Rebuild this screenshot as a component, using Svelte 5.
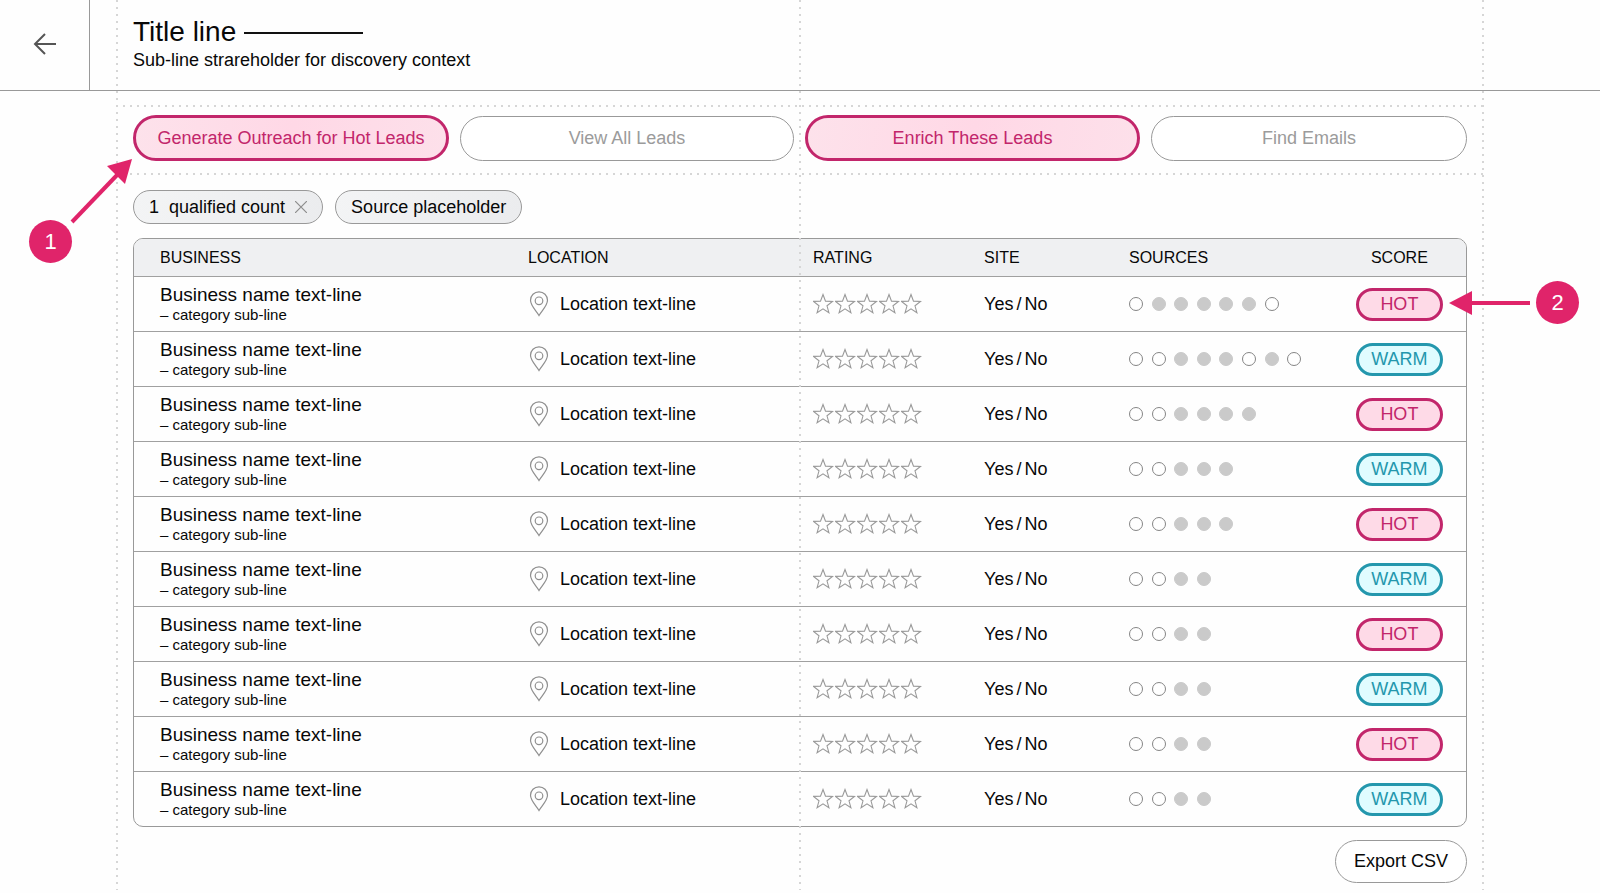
<script lang="ts">
  interface Lead { sources: string; score: 'HOT' | 'WARM' }

  // sources: "o" is an empty source, "x" is a matched one
  const leads: Lead[] = [
    { sources: 'oxxxxxo', score: 'HOT' },
    { sources: 'ooxxxoxo', score: 'WARM' },
    { sources: 'ooxxxx', score: 'HOT' },
    { sources: 'ooxxx', score: 'WARM' },
    { sources: 'ooxxx', score: 'HOT' },
    { sources: 'ooxx', score: 'WARM' },
    { sources: 'ooxx', score: 'HOT' },
    { sources: 'ooxx', score: 'WARM' },
    { sources: 'ooxx', score: 'HOT' },
    { sources: 'ooxx', score: 'WARM' },
  ]

  const actions = [
    { label: 'Generate Outreach for Hot Leads', primary: true },
    { label: 'View All Leads', primary: false },
    { label: 'Enrich These Leads', primary: true },
    { label: 'Find Emails', primary: false },
  ]
</script>

<div class="page">
  <header class="header">
    <button class="back" aria-label="Back">
      <svg width="24" height="24" viewBox="0 0 24 24" fill="none" stroke="#555" stroke-width="2">
        <path d="M23 12H2M12 2L2 12l10 10" />
      </svg>
    </button>
    <div class="heading">
      <h1>Title line <span class="rule"></span></h1>
      <p>Sub-line strareholder for discovery context</p>
    </div>
  </header>

  <main class="main">
    <div class="toolbar">
      {#each actions as action}
        <button class="action" class:primary={action.primary}>{action.label}</button>
      {/each}
    </div>

    <div class="content">
      <div class="chips">
        <span class="chip">
          <span>1</span>
          <span>qualified count</span>
          <button class="remove" aria-label="Remove filter">
            <svg width="12" height="12" viewBox="0 0 12 12" stroke="#8c8c8c" stroke-width="1.2">
              <path d="M0 0L12 12M12 0L0 12" />
            </svg>
          </button>
        </span>
        <span class="chip">Source placeholder</span>
      </div>

      <table class="leads">
        <colgroup>
          <col style="width:29.58%" />
          <col style="width:21.4%" />
          <col style="width:12.84%" />
          <col style="width:10.88%" />
          <col style="width:15.3%" />
          <col style="width:10%" />
        </colgroup>
        <thead>
          <tr>
            <th scope="col">BUSINESS</th>
            <th scope="col">LOCATION</th>
            <th scope="col">RATING</th>
            <th scope="col">SITE</th>
            <th scope="col">SOURCES</th>
            <th scope="col">SCORE</th>
          </tr>
        </thead>
        <tbody>
          {#each leads as lead}
            <tr>
              <td>
                <div class="name">Business name text-line</div>
                <div class="category">– category sub-line</div>
              </td>
              <td>
                <div class="location">
                  <svg width="22" height="26" viewBox="0 0 22 26" fill="none" stroke="#8f8f8f" stroke-width="1.2">
                    <path d="M11 24.500C9 20.500 2.500 15 2.500 9.300a8.500 8.500 0 0 1 17 0C19.500 15 13 20.500 11 24.500z" />
                    <circle cx="11" cy="9.800" r="3.800" />
                  </svg>
                  <span>Location text-line</span>
                </div>
              </td>
              <td>
                <div class="stars">
                  {#each Array(5) as _}
                    <svg width="22" height="22" viewBox="0 0 22 22" fill="none" stroke="#999" stroke-width="1.1">
                      <path d="M10 1.500L12.500 8.100L19.500 8.400L14 12.800L15.900 19.700L10 15.800L4.100 19.700L6 12.800L0.500 8.400L7.500 8.100Z" />
                    </svg>
                  {/each}
                </div>
              </td>
              <td>Yes<span class="slash">/</span>No</td>
              <td>
                <div class="sources">
                  {#each lead.sources as source}
                    <span class="dot" class:on={source === 'x'}></span>
                  {/each}
                </div>
              </td>
              <td><span class="score" class:hot={lead.score === 'HOT'}>{lead.score}</span></td>
            </tr>
          {/each}
        </tbody>
      </table>

      <div class="footer">
        <button class="export">Export CSV</button>
      </div>
    </div>
  </main>

  <div class="guides"><i></i><i></i><i></i></div>

  <!-- numbered callouts -->
  <div class="callout first">
    <svg width="64" height="66" viewBox="0 0 64 66" fill="#e0246a">
      <path d="M3 64L50 15" stroke="#e0246a" stroke-width="4" />
      <path d="M63 1L38 8L56 26Z" />
    </svg>
    <span class="badge">1</span>
  </div>
  <div class="callout second">
    <svg width="82" height="26" viewBox="0 0 82 26" fill="#e0246a">
      <path d="M81 13H20" stroke="#e0246a" stroke-width="4" />
      <path d="M0 13L23 1V25Z" />
    </svg>
    <span class="badge">2</span>
  </div>
</div>

<style>
  :global(body) { margin: 0; background: #fefefe; }
  .page {
    position: relative;
    min-height: 100vh;
    box-sizing: border-box;
    padding-bottom: 10px;
    font-family: "Liberation Sans", Arial, sans-serif;
    font-size: 18px;
    color: #080808;
  }
  button { font: inherit; color: inherit; cursor: pointer; }
  svg { display: block; flex-shrink: 0; }

  .header { display: flex; height: 90px; border-bottom: 1px solid #999; }
  .back {
    width: 90px;
    padding: 0 0 3px;
    display: flex; align-items: center; justify-content: center;
    background: none;
    border: 0; border-right: 1px solid #999;
  }
  .heading { padding: 16px 0 0 43px; }
  h1 {
    margin: 0;
    display: flex; align-items: center; gap: 8px;
    font-size: 28px; font-weight: 400; line-height: 32px;
  }
  .rule { width: 119px; height: 2px; margin-top: 2px; background: #111; }
  .heading p { margin: 0; line-height: 24px; }

  .main { padding: 14px 116px 0; }
  .toolbar {
    display: grid;
    grid-template-columns: 316fr 334fr 335fr 316fr;
    gap: 11px;
    align-items: center;
    padding: 10px 17px 14px;
    --dots: repeating-linear-gradient(90deg, #d6d6d6 0 2px, transparent 2px 7px);
    background: var(--dots) top / 100% 2px no-repeat, var(--dots) bottom / 100% 2px no-repeat;
  }
  .action {
    height: 45px;
    padding: 0 12px;
    border: 1px solid #999; border-radius: 23px;
    background: #fff;
    color: #9b9b9b;
    white-space: nowrap;
  }
  .action.primary {
    height: 46px;
    border: 3px solid #c2266b;
    background: linear-gradient(100deg, #fde2eb, #ffd8e6 50%, #fde0ea);
    color: #c2266b;
  }

  .content { padding: 0 17px; }
  .chips { display: flex; gap: 12px; margin: 15px 0 14px; }
  .chip {
    height: 32px;
    padding: 0 15px;
    display: flex; align-items: center; gap: 10px;
    border: 1px solid #999; border-radius: 17px;
    background: linear-gradient(100deg, #f3f4f5, #ebecee);
  }
  .remove { padding: 0; border: 0; background: none; }

  .leads {
    width: 100%;
    table-layout: fixed;
    border: 1px solid #999; border-radius: 10px;
    border-collapse: separate; border-spacing: 0;
    overflow: hidden;
  }
  th, td { padding: 0; text-align: left; border-bottom: 1px solid #a0a0a0; }
  th { height: 37px; background: #eff0f2; font-size: 16px; font-weight: 400; }
  td { height: 54px; }
  tr:last-child td { border-bottom: 0; }
  th:first-child, td:first-child { padding-left: 26px; }
  th:last-child, td:last-child { text-align: center; }
  .name { font-size: 19px; line-height: 22px; }
  .category { font-size: 15px; line-height: 18px; }
  .location { display: flex; align-items: center; gap: 10px; }
  .stars { display: flex; }
  .slash { padding: 0 3px; }
  .sources { display: grid; grid-template-columns: repeat(8, 1fr); width: 181px; }
  .dot {
    width: 14px; height: 14px;
    box-sizing: border-box;
    border: 1px solid #858585; border-radius: 50%;
    background: #fff;
  }
  .dot.on { border-color: #cacaca; background: #cacaca; }
  .score {
    display: inline-flex; align-items: center; justify-content: center;
    width: 87px; height: 33px;
    box-sizing: border-box;
    border: 3px solid #2497ad; border-radius: 17px;
    background: #e0fcff;
    color: #2497ad;
    vertical-align: middle;
  }
  .score.hot { border-color: #c2266b; background: #fedae7; color: #c2266b; }

  .footer { display: flex; justify-content: flex-end; margin-top: 13px; }
  .export {
    height: 43px;
    padding: 0 18px;
    border: 1px solid #999; border-radius: 22px;
    background: #fff;
  }

  .guides {
    position: absolute; inset: 0 116px 3px;
    display: flex; justify-content: space-between;
    pointer-events: none;
  }
  .guides i { width: 2px; background: repeating-linear-gradient(#d6d6d6 0 2px, transparent 2px 7px); }

  .callout { position: absolute; pointer-events: none; }
  .first { top: 158px; left: 29px; }
  .first svg { margin-left: 40px; }
  .first .badge { margin-top: -4px; }
  .second { top: 281px; right: 21px; display: flex; align-items: center; gap: 5px; }
  .badge {
    width: 43px; height: 43px;
    display: flex; align-items: center; justify-content: center;
    border-radius: 50%;
    background: #e0246a;
    color: #fff;
    font-size: 22px;
  }
</style>
